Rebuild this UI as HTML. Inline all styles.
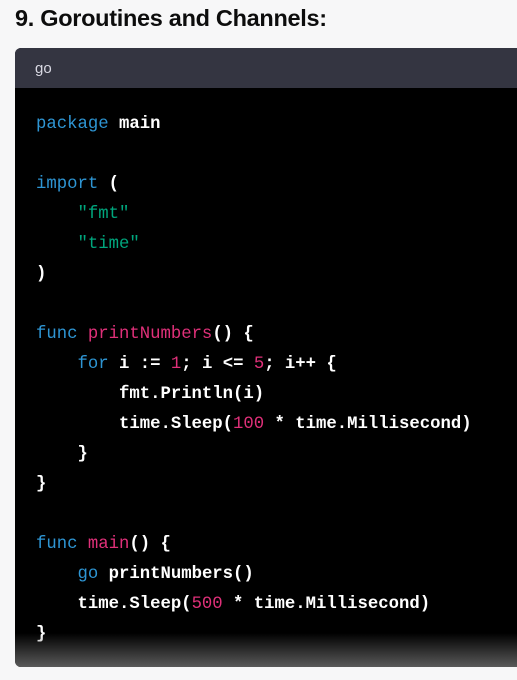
<!DOCTYPE html><html><head><style>
body{margin:0;background:#f7f7f8;width:517px;height:680px;overflow:hidden;font-family:"Liberation Sans",sans-serif}
h3{position:absolute;left:15px;top:5px;margin:0;font-size:23.5px;font-weight:bold;color:#0d0d0d;letter-spacing:-0.3px}
.box{position:absolute;left:15px;top:48px;width:520px;height:619px;border-radius:6px;overflow:hidden;background:#000}
.hd{height:40px;background:#343541;color:#d9d9e3;font-size:15px;line-height:42px;padding-left:20px}
pre{margin:0;padding:22px 0 0 21px;font-family:"Liberation Mono",monospace;font-size:17.3px;line-height:30px;color:#fff;font-weight:bold}
.k{color:#2e95d3;font-weight:normal}.s{color:#00a67d;font-weight:normal}.r{color:#df3079;font-weight:normal}
.fade{position:absolute;left:0;right:0;bottom:0;height:34px;background:linear-gradient(rgba(90,90,90,0),#5a5a5a)}
</style></head><body>
<h3>9. Goroutines and Channels:</h3>
<div class="box"><div class="hd">go</div>
<pre><span class="k">package</span> main

<span class="k">import</span> (
    <span class="s">"fmt"</span>
    <span class="s">"time"</span>
)

<span class="k">func</span> <span class="r">printNumbers</span>() {
    <span class="k">for</span> i := <span class="r">1</span>; i &lt;= <span class="r">5</span>; i++ {
        fmt.Println(i)
        time.Sleep(<span class="r">100</span> * time.Millisecond)
    }
}

<span class="k">func</span> <span class="r">main</span>() {
    <span class="k">go</span> printNumbers()
    time.Sleep(<span class="r">500</span> * time.Millisecond)
}</pre>
<div class="fade"></div></div>
</body></html>
